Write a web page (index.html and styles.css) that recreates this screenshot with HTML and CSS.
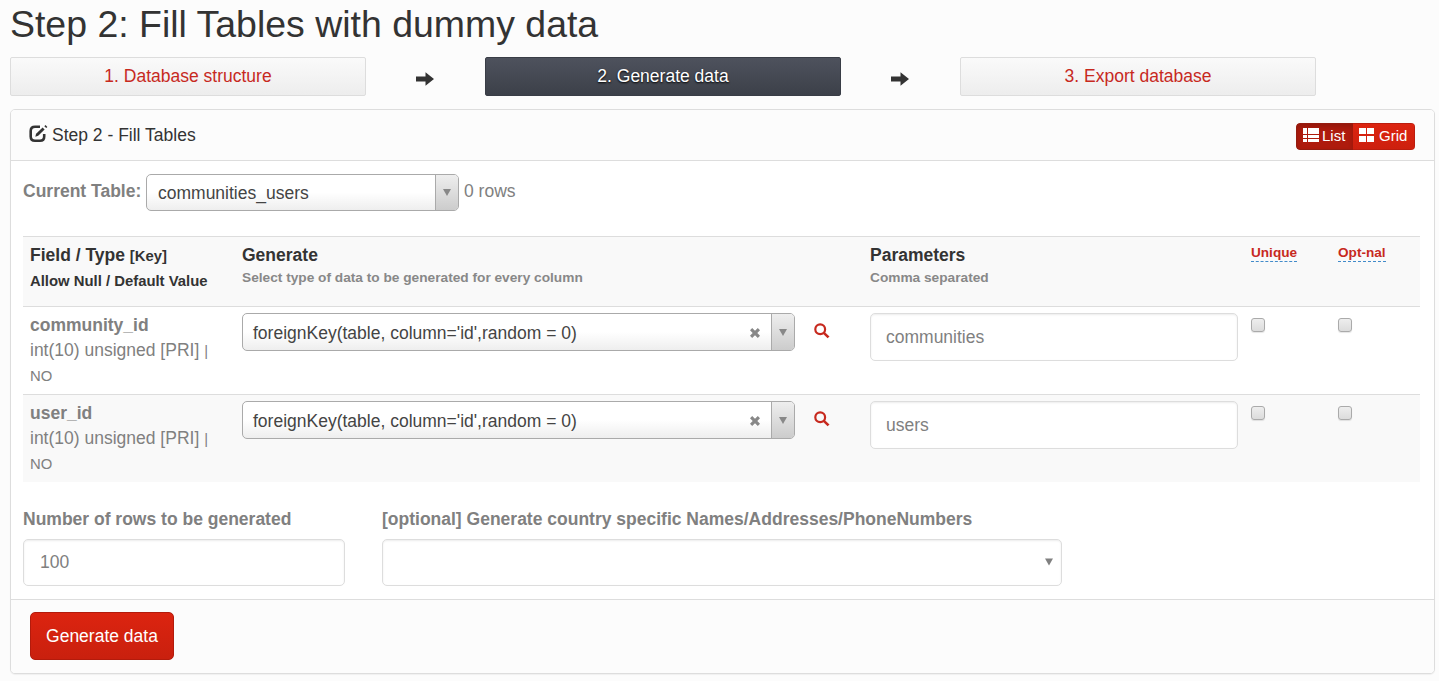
FILE: index.html
```
<!DOCTYPE html>
<html lang="en">
<head>
<meta charset="utf-8">
<title>Step 2: Fill Tables with dummy data</title>
<link rel="stylesheet" href="styles.css">
</head>
<body>
<svg class="defs" width="0" height="0">
  <symbol id="arrow" viewBox="0 0 18 14"><path d="M0 4.500h9.500V0.300L18 7l-8.500 6.700V9.500H0z"/></symbol>
  <symbol id="search" viewBox="0 0 16 16"><circle cx="6.200" cy="6.200" r="4.900" fill="none" stroke="currentColor" stroke-width="2.200"/><path d="M9.200 10.900l1.700-1.700 4.600 4.200-1.900 1.900z"/></symbol>
  <symbol id="cross" viewBox="0 0 12 12"><path d="M1 3.200L3.200 1 6 3.700 8.800 1 11 3.200 8.300 6 11 8.800 8.800 11 6 8.300 3.200 11 1 8.800 3.700 6z"/></symbol>
  <symbol id="caret" viewBox="0 0 8 7"><path d="M0 0h8L4 7z"/></symbol>
</svg>
<h1 class="title">Step 2: Fill Tables with dummy data</h1>
<nav class="steps">
  <a class="step">1. Database structure</a>
  <svg class="step-arrow"><use href="#arrow"/></svg>
  <a class="step step-active">2. Generate data</a>
  <svg class="step-arrow"><use href="#arrow"/></svg>
  <a class="step">3. Export database</a>
</nav>
<section class="panel">
  <header class="panel-head">
    <svg class="edit-icon" viewBox="0 0 18 18"><path d="M11 1.700H6Q1.700 1.700 1.700 6v5.500q0 4.200 4.300 4.200h5q4.200 0 4.200-4.200V9" fill="none" stroke="currentColor" stroke-width="2.600"/><path d="M6.300 11.700l.8-3 6.500-6.300 2 2-6.400 6.400z"/><path d="M15.300 1.200L16.500 0l1.900 1.900-1.200 1.200z"/></svg>
    <span class="panel-title">Step 2 - Fill Tables</span>
    <div class="toggle">
      <span class="tgl tgl-on"><svg viewBox="0 0 16 14"><path d="M0 0h4v6H0zM5 0h11v6H5zM0 7h4v3H0zM5 7h11v3H5zM0 11h4v3H0zM5 11h11v3H5z"/></svg>List</span>
      <span class="tgl"><svg viewBox="0 0 15 14"><path d="M0 0h7v6H0zM8 0h7v6H8zM0 8h7v6H0zM8 8h7v6H8z"/></svg>Grid</span>
    </div>
  </header>
  <div class="current">
    <b>Current Table:</b>
    <div class="select2 select2-table"><span class="chosen">communities_users</span><span class="drop"><svg><use href="#caret"/></svg></span></div>
    <span>0 rows</span>
  </div>
  <div class="grid">
    <div class="row row-head">
      <div class="field dark"><b>Field / Type <span class="sm">[Key]</span><br><span class="sm">Allow Null / Default Value</span></b></div>
      <div class="dark"><b>Generate</b><small class="sub sub-wide">Select type of data to be generated for every column</small></div>
      <div class="dark"><b>Parameters</b><small class="sub">Comma separated</small></div>
      <div class="hint"><span>Unique</span></div>
      <div class="hint"><span>Opt-nal</span></div>
    </div>
    <div class="row">
      <div class="field"><b>community_id</b><br>int(10) unsigned [PRI] <span class="sm">|<br>NO</span></div>
      <div class="generator"><div class="select2 select2-gen"><span class="chosen">foreignKey(table, column='id',random = 0)</span><svg class="clear"><use href="#cross"/></svg><span class="drop"><svg><use href="#caret"/></svg></span></div><svg class="search"><use href="#search"/></svg></div>
      <div class="input input-param">communities</div>
      <div class="check"></div>
      <div class="check"></div>
    </div>
    <div class="row row-alt">
      <div class="field"><b>user_id</b><br>int(10) unsigned [PRI] <span class="sm">|<br>NO</span></div>
      <div class="generator"><div class="select2 select2-gen"><span class="chosen">foreignKey(table, column='id',random = 0)</span><svg class="clear"><use href="#cross"/></svg><span class="drop"><svg><use href="#caret"/></svg></span></div><svg class="search"><use href="#search"/></svg></div>
      <div class="input input-param">users</div>
      <div class="check"></div>
      <div class="check"></div>
    </div>
  </div>
  <div class="options">
    <div><b class="label">Number of rows to be generated</b><div class="input">100</div></div>
    <div><b class="label">[optional] Generate country specific Names/Addresses/PhoneNumbers</b><div class="input input-select"><svg><use href="#caret"/></svg></div></div>
  </div>
  <footer class="panel-foot"><button class="submit">Generate data</button></footer>
</section>
</body>
</html>
```

FILE: styles.css
```
* { box-sizing: border-box; }
body { margin: 0; padding: 4px 0 0 10px; height: 681px; overflow: hidden; background: #fcfcfc; color: #808080; font: 17.5px/25px "Liberation Sans", Arial, sans-serif; }
svg { fill: currentColor; display: block; flex: none; }
.defs { position: absolute; }
.title { margin: 0 0 12px; color: #333; font-size: 37.45px; font-weight: 400; line-height: 41px; }
.steps { display: grid; grid-template-columns: 356px 119px 356px 119px 356px; height: 39px; margin-bottom: 13px; color: #333; }
.step { padding-top: 6px; border: 1px solid #ddd; border-radius: 2px; background: linear-gradient(#fafafa, #ededed); color: #c7291e; text-align: center; }
.step-active { border-color: #393d46; background: linear-gradient(#4e525d, #3c4049); color: #fff; text-shadow: 0 1px 2px #000; }
.step-arrow { width: 18px; height: 14px; margin: 15px 0 0 50px; }
.panel { width: 1425px; height: 565px; border: 1px solid #ddd; border-radius: 5px; background: #fff; box-shadow: 0 1px 1px rgba(0,0,0,.05); overflow: hidden; }
.panel-head { display: flex; height: 51px; padding: 12px 19px 0 18px; border-bottom: 1px solid #ddd; background: #fcfcfc; color: #333; }
.panel-title { padding-top: 1px; }
.edit-icon { width: 18px; height: 18px; margin: 3px 5px 0 0; overflow: visible; }
.toggle { display: flex; width: 119px; height: 27px; margin: 1px 0 0 auto; border-radius: 4px; overflow: hidden; color: #fff; font-size: 15px; line-height: 24px; }
.tgl { display: flex; width: 62px; padding-left: 6px; border: 1px solid #bb1d0e; border-left: 0; background: linear-gradient(#dc2410, #cd200e); }
.tgl svg { width: 15px; height: 14px; margin: 4px 5px 0 0; }
.tgl-on { width: 57px; padding-left: 6px; border-color: #951c10; border-left: 1px solid #951c10; border-right: 0; border-radius: 4px 0 0 4px; background: #ae1b0d; box-shadow: inset 0 3px 5px rgba(0,0,0,.15); }
.tgl-on svg { width: 16px; margin-right: 3px; }
.current { display: flex; height: 75px; padding: 13px 0 0 12px; }
.current > b { width: 123px; margin-top: 5px; }
.current > span { margin: 5px 0 0 5px; }
.select2 { display: flex; border: 1px solid #aaa; border-radius: 5px; background: linear-gradient(#fff 50%, #eee); color: #444; overflow: hidden; }
.select2-table { width: 313px; height: 37px; }
.select2-gen { width: 553px; height: 38px; }
.chosen { flex: 1; padding: 7px 0 0 10px; }
.select2-table .chosen { padding: 6px 0 0 11px; }
.drop { width: 23px; border-left: 1px solid #aaa; background: linear-gradient(#eee, #ccc); color: #888; }
.drop svg { width: 8px; height: 7px; margin: 15px 0 0 7px; }
.select2-table .drop svg { margin-top: 14px; }
.clear { width: 12px; height: 12px; margin: 13px 10px 0 0; color: #888; }
.grid { width: 1397px; margin-left: 12px; }
.row { display: grid; grid-template-columns: 212px 628px 381px 87px 1fr; align-items: start; height: 88px; padding: 6px 0 0 7px; border-top: 1px solid #ddd; }
.row-head { height: 70px; background: #f9f9f9; }
.row-alt { background: #f9f9f9; }
.dark { color: #333; }
.field { width: 195px; }
.row-head .field { white-space: nowrap; }
.sm { font-size: 14.875px; line-height: 20px; }
.sub { display: block; margin-top: -3px; color: #888; font-size: 13.700px; font-weight: 700; }
.hint { padding-top: 2px; color: #c7291e; font-size: 13.600px; font-weight: 700; line-height: 16px; }
.hint span { display: inline-block; height: 17px; border-bottom: 1px dashed #428bca; }
.generator { display: flex; }
.search { width: 16px; height: 16px; margin: 10px 0 0 19px; color: #c7291e; }
.input { width: 322px; height: 47px; padding: 10px 16px; border: 1px solid #ddd; border-radius: 5px; background: #fff; box-shadow: inset 0 1px 2px rgba(0,0,0,.075); }
.input-param { width: 368px; height: 48px; padding: 11px 15px; }
.check { width: 14px; height: 14px; margin-top: 5px; border: 1px solid #aaa; border-radius: 3px; background: linear-gradient(#eee, #dcdcdc); box-shadow: 0 1px 1px rgba(0,0,0,.1); }
.options { display: flex; gap: 37px; height: 117px; padding: 25px 0 0 12px; }
.label { display: block; height: 32px; white-space: nowrap; }
.input-select { width: 680px; padding: 18px 8px; }
.input-select svg { width: 8px; height: 8px; margin-left: auto; }
.panel-foot { height: 75px; padding: 12px 19px; border-top: 1px solid #ddd; background: #fcfcfc; }
.submit { display: block; width: 144px; height: 48px; padding: 0; border: 1px solid #b31b0c; border-radius: 5px; background: linear-gradient(#dc2410, #c9200e); color: #fff; font: inherit; }
```
